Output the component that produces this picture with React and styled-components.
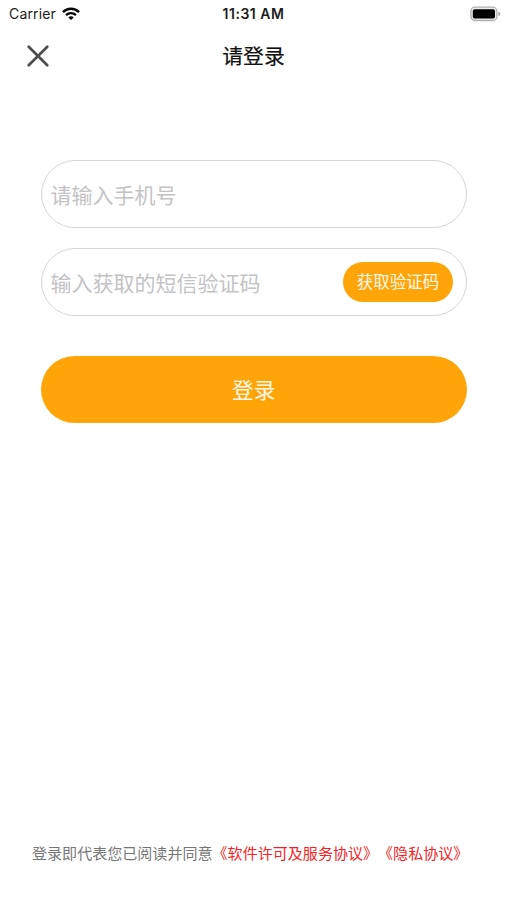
import React, { Component } from 'react'
import styled, { createGlobalStyle } from 'styled-components'

const GlobalStyle = createGlobalStyle`
  body {
    margin: 0;
    background: #fff;
    font-family: "Liberation Sans", "Noto Sans CJK SC", sans-serif;
  }

  * {
    box-sizing: border-box;
  }
`

const Page = styled.div`
  display: flex;
  flex-direction: column;
  height: 900px;
  background: #fff;
`

const StatusBar = styled.div`
  display: grid;
  grid-template-columns: 1fr auto 1fr;
  align-items: center;
  height: 27px;
  padding: 0 6px 0 9px;
  font-family: Inter, sans-serif;
  font-size: 14px;
  line-height: 27px;
  color: #1c1c1c;
`

const Carrier = styled.div`
  display: flex;
  align-items: center;
  gap: 6px;
  letter-spacing: 0.15px;
`

const Time = styled.div`
  padding-right: 3px;
  font-size: 14px;
  font-weight: 600;
  letter-spacing: 0.5px;
`

const Battery = styled.div`
  display: flex;
  justify-content: flex-end;
`

const Header = styled.div`
  display: grid;
  grid-template-columns: 48px 1fr 48px;
  align-items: center;
  height: 58px;
  padding: 0 14px;
`

const CloseButton = styled.button`
  display: flex;
  align-items: center;
  justify-content: center;
  width: 48px;
  height: 48px;
  padding: 0;
  border: 0;
  background: none;
`

const Title = styled.h1`
  margin: 0;
  padding-top: 2px;
  font-size: 20.8px;
  font-weight: 400;
  line-height: 30px;
  text-align: center;
  color: #111;
  -webkit-text-stroke: 0.2px #111;
`

const Form = styled.form`
  display: flex;
  flex-direction: column;
  padding: 75px 40.5px 0 41px;
`

const Field = styled.div`
  display: flex;
  align-items: center;
  height: 68px;
  margin-bottom: 20px;
  padding: 0 12.5px 0 8.5px;
  border: 1.5px solid #d6d6d8;
  border-radius: 34px;
`

const InputText = styled.input`
  flex: 1;
  min-width: 0;
  height: 40px;
  padding: 3px 0 0;
  border: 0;
  outline: 0;
  background: none;
  font-family: inherit;
  font-size: 21px;
  color: #333;

  &::placeholder {
    color: #c3c3c5;
    opacity: 1;
  }
`

const Button = styled.button`
  width: ${props => props.$small ? '110px' : '100%'};
  height: ${props => props.$small ? '40px' : '67px'};
  margin-top: ${props => props.$small ? '0' : '20px'};
  padding: 0 0 2px;
  border: 0;
  border-radius: 34px;
  background: #ffa50a;
  font-family: inherit;
  font-size: ${props => props.$small ? '16.5px' : '21.7px'};
  color: #fff8e8;
`

const Agreement = styled.div`
  margin-top: auto;
  padding: 0 0 34px 32px;
  font-size: 15.05px;
  line-height: 24px;
  white-space: nowrap;
  text-spacing-trim: space-all;
  color: #777;
`

const Link = styled.a`
  color: #fb1d25;
`

const WifiIcon = () => (
    <svg width="18" height="14" viewBox="0 0 18 14" fill="none" stroke="#050505">
        <path d="M1 5.1C5.4 .7 12.6 .7 17 5.1" strokeWidth="2.4" />
        <path d="M4 8.1C6.8 5.4 11.2 5.4 14 8.1" strokeWidth="2.2" />
        <path d="M6.3 10.4C7.8 9 10.2 9 11.7 10.4L9 13.1Z" fill="#050505" stroke="none" />
    </svg>
)

const BatteryIcon = () => (
    <svg width="31" height="16" viewBox="0 0 31 16">
        <rect x=".9" y="1.2" width="26" height="13.3" rx="4" fill="#ededed" stroke="#b0b0b0" strokeWidth="1.3" />
        <rect x="2.8" y="3.2" width="22.2" height="9.3" rx="1.8" fill="#000" />
        <path d="M28.4 5.6C30.9 6.4 30.9 9.4 28.4 10.2Z" fill="#a6a6a6" />
    </svg>
)

const CloseIcon = () => (
    <svg width="24" height="24" viewBox="0 0 24 24" stroke="#4c4c4c" strokeWidth="2.7" strokeLinecap="round">
        <path d="M2.7 2.7L21.3 21.3M21.3 2.7L2.7 21.3" />
    </svg>
)

class App extends Component {
    constructor(props) {
        super(props)

        this.state = {
            phone: '',
            code: '',
        }
    }

    handleChangeInputPhone = event => {
        const phone = event.target.value
        this.setState({ phone })
    }

    handleChangeInputCode = event => {
        const code = event.target.value
        this.setState({ code })
    }

    handleSubmit = event => {
        event.preventDefault()
    }

    render() {
        const { phone, code } = this.state
        return (
            <Page>
                <GlobalStyle />

                <StatusBar>
                    <Carrier>Carrier <WifiIcon /></Carrier>
                    <Time>11:31 AM</Time>
                    <Battery><BatteryIcon /></Battery>
                </StatusBar>

                <Header>
                    <CloseButton aria-label="关闭"><CloseIcon /></CloseButton>
                    <Title>请登录</Title>
                </Header>

                <Form onSubmit={this.handleSubmit}>
                    <Field>
                        <InputText
                            type="tel"
                            placeholder="请输入手机号"
                            value={phone}
                            onChange={this.handleChangeInputPhone}
                        />
                    </Field>
                    <Field>
                        <InputText
                            type="text"
                            placeholder="输入获取的短信验证码"
                            value={code}
                            onChange={this.handleChangeInputCode}
                        />
                        <Button type="button" $small>获取验证码</Button>
                    </Field>
                    <Button type="submit">登录</Button>
                </Form>

                <Agreement>
                    登录即代表您已阅读并同意<Link>《软件许可及服务协议》</Link><Link>《隐私协议》</Link>
                </Agreement>
            </Page>
        )
    }
}

export default App
